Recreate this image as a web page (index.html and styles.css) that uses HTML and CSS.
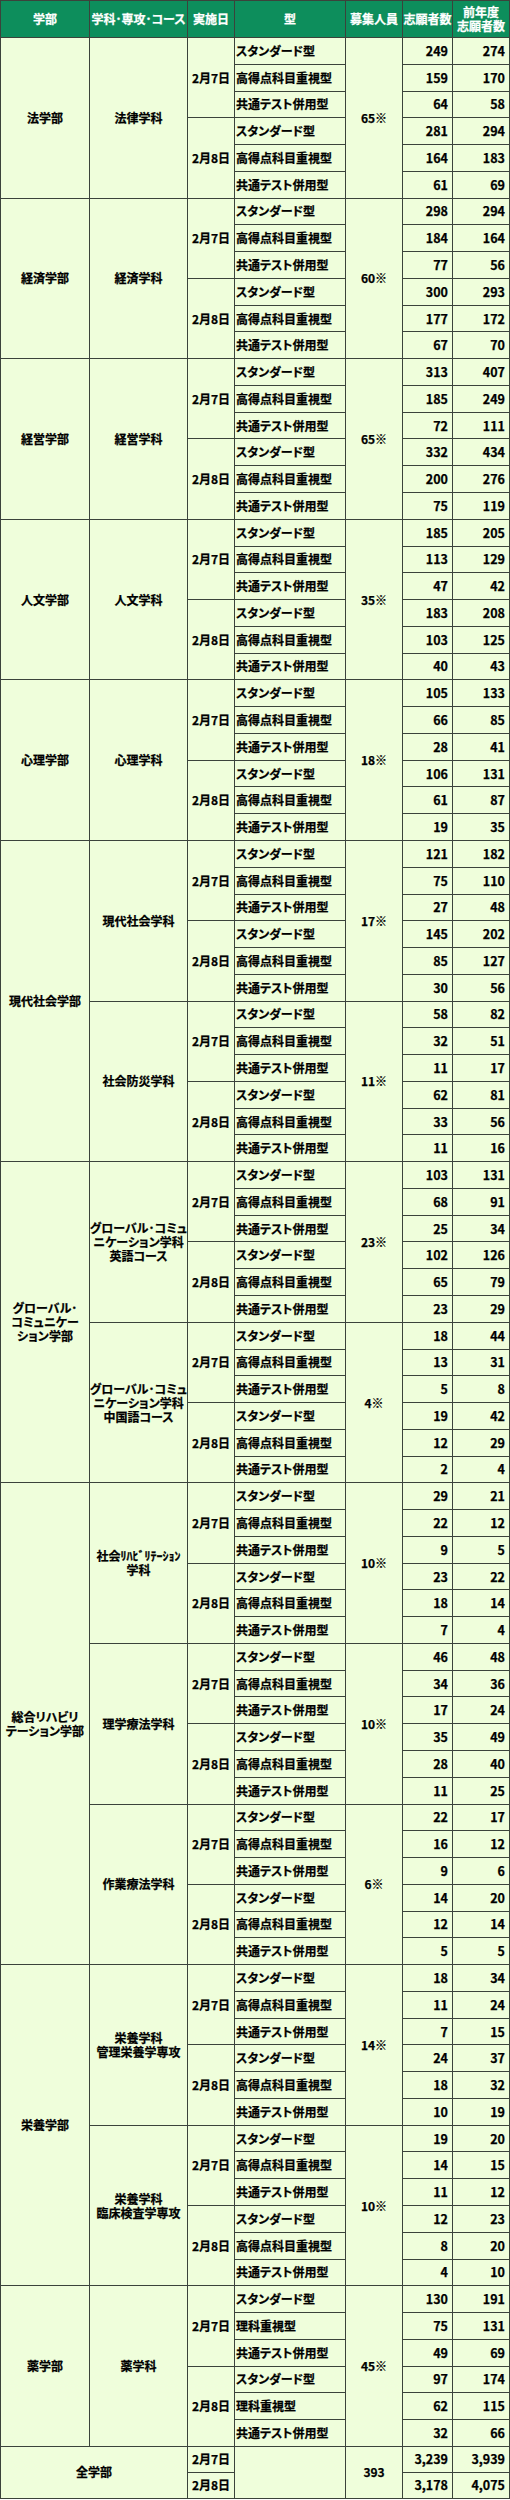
FILE: index.html
```html
<!DOCTYPE html>
<html lang="ja">
<head>
<meta charset="utf-8">
<title>志願者数</title>
<link rel="stylesheet" href="styles.css">
</head>
<body>
<div class="sheet">
  <div class="c h">学部</div>
  <div class="c h">学科･専攻･コース</div>
  <div class="c h">実施日</div>
  <div class="c h">型</div>
  <div class="c h">募集人員</div>
  <div class="c h">志願者数</div>
  <div class="c h">前年度<br>志願者数</div>

  <!-- 法学部 -->
  <div class="c r6">法学部</div><div class="c r6">法律学科</div><div class="c r3">2月7日</div><div class="c t">スタンダード型</div><div class="c r6">65※</div><div class="c n">249</div><div class="c n">274</div>
  <div class="c t">高得点科目重視型</div><div class="c n">159</div><div class="c n">170</div>
  <div class="c t">共通テスト併用型</div><div class="c n">64</div><div class="c n">58</div>
  <div class="c r3">2月8日</div><div class="c t">スタンダード型</div><div class="c n">281</div><div class="c n">294</div>
  <div class="c t">高得点科目重視型</div><div class="c n">164</div><div class="c n">183</div>
  <div class="c t">共通テスト併用型</div><div class="c n">61</div><div class="c n">69</div>

  <!-- 経済学部 -->
  <div class="c r6">経済学部</div><div class="c r6">経済学科</div><div class="c r3">2月7日</div><div class="c t">スタンダード型</div><div class="c r6">60※</div><div class="c n">298</div><div class="c n">294</div>
  <div class="c t">高得点科目重視型</div><div class="c n">184</div><div class="c n">164</div>
  <div class="c t">共通テスト併用型</div><div class="c n">77</div><div class="c n">56</div>
  <div class="c r3">2月8日</div><div class="c t">スタンダード型</div><div class="c n">300</div><div class="c n">293</div>
  <div class="c t">高得点科目重視型</div><div class="c n">177</div><div class="c n">172</div>
  <div class="c t">共通テスト併用型</div><div class="c n">67</div><div class="c n">70</div>

  <!-- 経営学部 -->
  <div class="c r6">経営学部</div><div class="c r6">経営学科</div><div class="c r3">2月7日</div><div class="c t">スタンダード型</div><div class="c r6">65※</div><div class="c n">313</div><div class="c n">407</div>
  <div class="c t">高得点科目重視型</div><div class="c n">185</div><div class="c n">249</div>
  <div class="c t">共通テスト併用型</div><div class="c n">72</div><div class="c n">111</div>
  <div class="c r3">2月8日</div><div class="c t">スタンダード型</div><div class="c n">332</div><div class="c n">434</div>
  <div class="c t">高得点科目重視型</div><div class="c n">200</div><div class="c n">276</div>
  <div class="c t">共通テスト併用型</div><div class="c n">75</div><div class="c n">119</div>

  <!-- 人文学部 -->
  <div class="c r6">人文学部</div><div class="c r6">人文学科</div><div class="c r3">2月7日</div><div class="c t">スタンダード型</div><div class="c r6">35※</div><div class="c n">185</div><div class="c n">205</div>
  <div class="c t">高得点科目重視型</div><div class="c n">113</div><div class="c n">129</div>
  <div class="c t">共通テスト併用型</div><div class="c n">47</div><div class="c n">42</div>
  <div class="c r3">2月8日</div><div class="c t">スタンダード型</div><div class="c n">183</div><div class="c n">208</div>
  <div class="c t">高得点科目重視型</div><div class="c n">103</div><div class="c n">125</div>
  <div class="c t">共通テスト併用型</div><div class="c n">40</div><div class="c n">43</div>

  <!-- 心理学部 -->
  <div class="c r6">心理学部</div><div class="c r6">心理学科</div><div class="c r3">2月7日</div><div class="c t">スタンダード型</div><div class="c r6">18※</div><div class="c n">105</div><div class="c n">133</div>
  <div class="c t">高得点科目重視型</div><div class="c n">66</div><div class="c n">85</div>
  <div class="c t">共通テスト併用型</div><div class="c n">28</div><div class="c n">41</div>
  <div class="c r3">2月8日</div><div class="c t">スタンダード型</div><div class="c n">106</div><div class="c n">131</div>
  <div class="c t">高得点科目重視型</div><div class="c n">61</div><div class="c n">87</div>
  <div class="c t">共通テスト併用型</div><div class="c n">19</div><div class="c n">35</div>

  <!-- 現代社会学部 -->
  <div class="c r12">現代社会学部</div><div class="c r6">現代社会学科</div><div class="c r3">2月7日</div><div class="c t">スタンダード型</div><div class="c r6">17※</div><div class="c n">121</div><div class="c n">182</div>
  <div class="c t">高得点科目重視型</div><div class="c n">75</div><div class="c n">110</div>
  <div class="c t">共通テスト併用型</div><div class="c n">27</div><div class="c n">48</div>
  <div class="c r3">2月8日</div><div class="c t">スタンダード型</div><div class="c n">145</div><div class="c n">202</div>
  <div class="c t">高得点科目重視型</div><div class="c n">85</div><div class="c n">127</div>
  <div class="c t">共通テスト併用型</div><div class="c n">30</div><div class="c n">56</div>
  <div class="c r6">社会防災学科</div><div class="c r3">2月7日</div><div class="c t">スタンダード型</div><div class="c r6">11※</div><div class="c n">58</div><div class="c n">82</div>
  <div class="c t">高得点科目重視型</div><div class="c n">32</div><div class="c n">51</div>
  <div class="c t">共通テスト併用型</div><div class="c n">11</div><div class="c n">17</div>
  <div class="c r3">2月8日</div><div class="c t">スタンダード型</div><div class="c n">62</div><div class="c n">81</div>
  <div class="c t">高得点科目重視型</div><div class="c n">33</div><div class="c n">56</div>
  <div class="c t">共通テスト併用型</div><div class="c n">11</div><div class="c n">16</div>

  <!-- グローバル・コミュニケーション学部 -->
  <div class="c r12">グローバル･<br>コミュニケー<br>ション学部</div><div class="c r6">グローバル･コミュ<br>ニケーション学科<br>英語コース</div><div class="c r3">2月7日</div><div class="c t">スタンダード型</div><div class="c r6">23※</div><div class="c n">103</div><div class="c n">131</div>
  <div class="c t">高得点科目重視型</div><div class="c n">68</div><div class="c n">91</div>
  <div class="c t">共通テスト併用型</div><div class="c n">25</div><div class="c n">34</div>
  <div class="c r3">2月8日</div><div class="c t">スタンダード型</div><div class="c n">102</div><div class="c n">126</div>
  <div class="c t">高得点科目重視型</div><div class="c n">65</div><div class="c n">79</div>
  <div class="c t">共通テスト併用型</div><div class="c n">23</div><div class="c n">29</div>
  <div class="c r6">グローバル･コミュ<br>ニケーション学科<br>中国語コース</div><div class="c r3">2月7日</div><div class="c t">スタンダード型</div><div class="c r6">4※</div><div class="c n">18</div><div class="c n">44</div>
  <div class="c t">高得点科目重視型</div><div class="c n">13</div><div class="c n">31</div>
  <div class="c t">共通テスト併用型</div><div class="c n">5</div><div class="c n">8</div>
  <div class="c r3">2月8日</div><div class="c t">スタンダード型</div><div class="c n">19</div><div class="c n">42</div>
  <div class="c t">高得点科目重視型</div><div class="c n">12</div><div class="c n">29</div>
  <div class="c t">共通テスト併用型</div><div class="c n">2</div><div class="c n">4</div>

  <!-- 総合リハビリテーション学部 -->
  <div class="c r18">総合リハビリ<br>テーション学部</div><div class="c r6">社会ﾘﾊﾋﾞﾘﾃｰｼｮﾝ<br>学科</div><div class="c r3">2月7日</div><div class="c t">スタンダード型</div><div class="c r6">10※</div><div class="c n">29</div><div class="c n">21</div>
  <div class="c t">高得点科目重視型</div><div class="c n">22</div><div class="c n">12</div>
  <div class="c t">共通テスト併用型</div><div class="c n">9</div><div class="c n">5</div>
  <div class="c r3">2月8日</div><div class="c t">スタンダード型</div><div class="c n">23</div><div class="c n">22</div>
  <div class="c t">高得点科目重視型</div><div class="c n">18</div><div class="c n">14</div>
  <div class="c t">共通テスト併用型</div><div class="c n">7</div><div class="c n">4</div>
  <div class="c r6">理学療法学科</div><div class="c r3">2月7日</div><div class="c t">スタンダード型</div><div class="c r6">10※</div><div class="c n">46</div><div class="c n">48</div>
  <div class="c t">高得点科目重視型</div><div class="c n">34</div><div class="c n">36</div>
  <div class="c t">共通テスト併用型</div><div class="c n">17</div><div class="c n">24</div>
  <div class="c r3">2月8日</div><div class="c t">スタンダード型</div><div class="c n">35</div><div class="c n">49</div>
  <div class="c t">高得点科目重視型</div><div class="c n">28</div><div class="c n">40</div>
  <div class="c t">共通テスト併用型</div><div class="c n">11</div><div class="c n">25</div>
  <div class="c r6">作業療法学科</div><div class="c r3">2月7日</div><div class="c t">スタンダード型</div><div class="c r6">6※</div><div class="c n">22</div><div class="c n">17</div>
  <div class="c t">高得点科目重視型</div><div class="c n">16</div><div class="c n">12</div>
  <div class="c t">共通テスト併用型</div><div class="c n">9</div><div class="c n">6</div>
  <div class="c r3">2月8日</div><div class="c t">スタンダード型</div><div class="c n">14</div><div class="c n">20</div>
  <div class="c t">高得点科目重視型</div><div class="c n">12</div><div class="c n">14</div>
  <div class="c t">共通テスト併用型</div><div class="c n">5</div><div class="c n">5</div>

  <!-- 栄養学部 -->
  <div class="c r12">栄養学部</div><div class="c r6">栄養学科<br>管理栄養学専攻</div><div class="c r3">2月7日</div><div class="c t">スタンダード型</div><div class="c r6">14※</div><div class="c n">18</div><div class="c n">34</div>
  <div class="c t">高得点科目重視型</div><div class="c n">11</div><div class="c n">24</div>
  <div class="c t">共通テスト併用型</div><div class="c n">7</div><div class="c n">15</div>
  <div class="c r3">2月8日</div><div class="c t">スタンダード型</div><div class="c n">24</div><div class="c n">37</div>
  <div class="c t">高得点科目重視型</div><div class="c n">18</div><div class="c n">32</div>
  <div class="c t">共通テスト併用型</div><div class="c n">10</div><div class="c n">19</div>
  <div class="c r6">栄養学科<br>臨床検査学専攻</div><div class="c r3">2月7日</div><div class="c t">スタンダード型</div><div class="c r6">10※</div><div class="c n">19</div><div class="c n">20</div>
  <div class="c t">高得点科目重視型</div><div class="c n">14</div><div class="c n">15</div>
  <div class="c t">共通テスト併用型</div><div class="c n">11</div><div class="c n">12</div>
  <div class="c r3">2月8日</div><div class="c t">スタンダード型</div><div class="c n">12</div><div class="c n">23</div>
  <div class="c t">高得点科目重視型</div><div class="c n">8</div><div class="c n">20</div>
  <div class="c t">共通テスト併用型</div><div class="c n">4</div><div class="c n">10</div>

  <!-- 薬学部 -->
  <div class="c r6">薬学部</div><div class="c r6">薬学科</div><div class="c r3">2月7日</div><div class="c t">スタンダード型</div><div class="c r6">45※</div><div class="c n">130</div><div class="c n">191</div>
  <div class="c t">理科重視型</div><div class="c n">75</div><div class="c n">131</div>
  <div class="c t">共通テスト併用型</div><div class="c n">49</div><div class="c n">69</div>
  <div class="c r3">2月8日</div><div class="c t">スタンダード型</div><div class="c n">97</div><div class="c n">174</div>
  <div class="c t">理科重視型</div><div class="c n">62</div><div class="c n">115</div>
  <div class="c t">共通テスト併用型</div><div class="c n">32</div><div class="c n">66</div>

  <!-- 全学部 -->
  <div class="c r2 w2">全学部</div><div class="c">2月7日</div><div class="c r2"></div><div class="c r2">393</div><div class="c n">3,239</div><div class="c n">3,939</div>
  <div class="c">2月8日</div><div class="c n">3,178</div><div class="c n">4,075</div>
</div>
</body>
</html>
```

FILE: styles.css
```css
html, body {
  margin: 0;
  padding: 0;
  background: #ffffff;
}

.sheet {
  display: grid;
  grid-template-columns: 88px 97px 46px 110px 56px 49px 56px;
  grid-template-rows: 36px repeat(90, 25.78px) 25px 25px;
  gap: 1px;
  padding: 1px;
  width: 510px;
  box-sizing: border-box;
  background: #3b433b;
  font-family: "Noto Sans CJK JP", sans-serif;
  font-weight: 700;
  font-size: 12px;
  line-height: 14px;
  font-feature-settings: "palt";
  color: #000000;
  -webkit-text-stroke: 0.25px currentColor;
}

.c {
  display: flex;
  align-items: center;
  justify-content: center;
  text-align: center;
  white-space: nowrap;
  background: #effedb;
  overflow: visible;
}

.h {
  background: #0d8e5c;
  color: #ffffff;
}

.t {
  justify-content: flex-start;
  padding-left: 1px;
}

.n {
  justify-content: flex-end;
  padding-right: 4px;
  font-size: 12.5px;
}

.r2 { grid-row: span 2; }
.r3 { grid-row: span 3; }
.r6 { grid-row: span 6; }
.r12 { grid-row: span 12; }
.r18 { grid-row: span 18; }
.w2 { grid-column: span 2; }
```
